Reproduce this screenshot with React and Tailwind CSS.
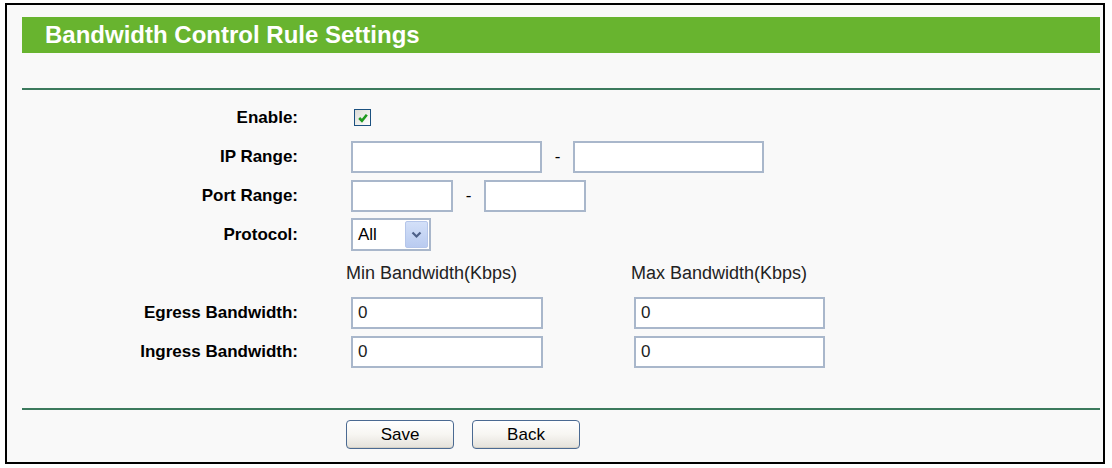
import React from "react";

const font = { fontFamily: '"Liberation Sans", Arial, sans-serif' };

function TextInput({ w, value = "" }) {
  return (
    <div
      className={`${w} h-[32px] border-2 border-[#a9b7cb] bg-white flex items-center pl-[5px] text-[17px] text-[#222]`}
    >
      {value}
    </div>
  );
}

function Row({ label, children }) {
  return (
    <div className="h-[39px] flex items-center">
      <div className="w-[291px] text-right font-bold text-[17px] text-black">{label}</div>
      <div className="ml-[53px] flex items-center">{children}</div>
    </div>
  );
}

function Dash({ w }) {
  return <div className={`${w} text-center text-[17px] text-black`}>-</div>;
}

function Btn({ children }) {
  return (
    <div className="w-[108px] h-[29px] rounded-[4px] border border-[#4b6a92] bg-gradient-to-b from-white via-[#f7f6f2] to-[#e4e1da] flex items-center justify-center text-[17px] text-black shadow-[inset_0_-1px_0_#d5d1c7]">
      {children}
    </div>
  );
}

export default function App() {
  return (
    <div className="w-[1112px] h-[468px] bg-white pt-[3px] pl-[5px]" style={font}>
      <div className="w-[1100px] h-[461px] border-2 border-black bg-[#f9f9f9] flex flex-col">
        <div className="mt-[12px] ml-[15px] w-[1078px] h-[36px] bg-[#68b42f] pl-[23px] text-white font-bold text-[24px] leading-[36px]">
          Bandwidth Control Rule Settings
        </div>
        <div className="mt-[35px] ml-[15px] w-[1078px] h-[2px] bg-[#3c7a5d]" />

        <div className="mt-[8px] flex flex-col">
          <Row label="Enable:">
            <div className="ml-[3px] w-[17px] h-[17px] border border-[#1c5180] bg-gradient-to-br from-[#dcdcd6] to-white flex items-center justify-center">
              <svg width="12" height="12" viewBox="0 0 11 11">
                <path d="M2 5.5 L4.5 8 L9 2.5" fill="none" stroke="#1e9a1e" strokeWidth="2.4" />
              </svg>
            </div>
          </Row>
          <Row label="IP Range:">
            <TextInput w="w-[191px]" />
            <Dash w="w-[31px]" />
            <TextInput w="w-[191px]" />
          </Row>
          <Row label="Port Range:">
            <TextInput w="w-[102px]" />
            <Dash w="w-[31px]" />
            <TextInput w="w-[102px]" />
          </Row>
          <Row label="Protocol:">
            <div className="w-[80px] h-[33px] border-2 border-[#a9b7cb] bg-white flex items-center justify-between pl-[5px] pr-[1px] text-[17px] text-black">
              <span>All</span>
              <div className="w-[23px] h-[27px] rounded-[2px] border border-[#b5c6ea] bg-gradient-to-b from-[#d3e0f8] to-[#b9cbf0] flex items-center justify-center">
                <svg width="11" height="8" viewBox="0 0 11 8">
                  <path d="M1.5 1.5 L5.5 5.5 L9.5 1.5" fill="none" stroke="#4d6088" strokeWidth="2.2" />
                </svg>
              </div>
            </div>
          </Row>
          <div className="h-[39px] flex items-center">
            <div className="w-[291px]" />
            <div className="ml-[48px] w-[285px] text-[18px] text-[#222]">Min Bandwidth(Kbps)</div>
            <div className="text-[18px] text-[#222]">Max Bandwidth(Kbps)</div>
          </div>
          <Row label="Egress Bandwidth:">
            <TextInput w="w-[192px]" value="0" />
            <div className="w-[91px]" />
            <TextInput w="w-[191px]" value="0" />
          </Row>
          <Row label="Ingress Bandwidth:">
            <TextInput w="w-[192px]" value="0" />
            <div className="w-[91px]" />
            <TextInput w="w-[191px]" value="0" />
          </Row>
        </div>

        <div className="mt-[37px] ml-[15px] w-[1078px] h-[2px] bg-[#3c7a5d]" />
        <div className="mt-[10px] ml-[339px] flex gap-[18px]">
          <Btn>Save</Btn>
          <Btn>Back</Btn>
        </div>
      </div>
    </div>
  );
}
